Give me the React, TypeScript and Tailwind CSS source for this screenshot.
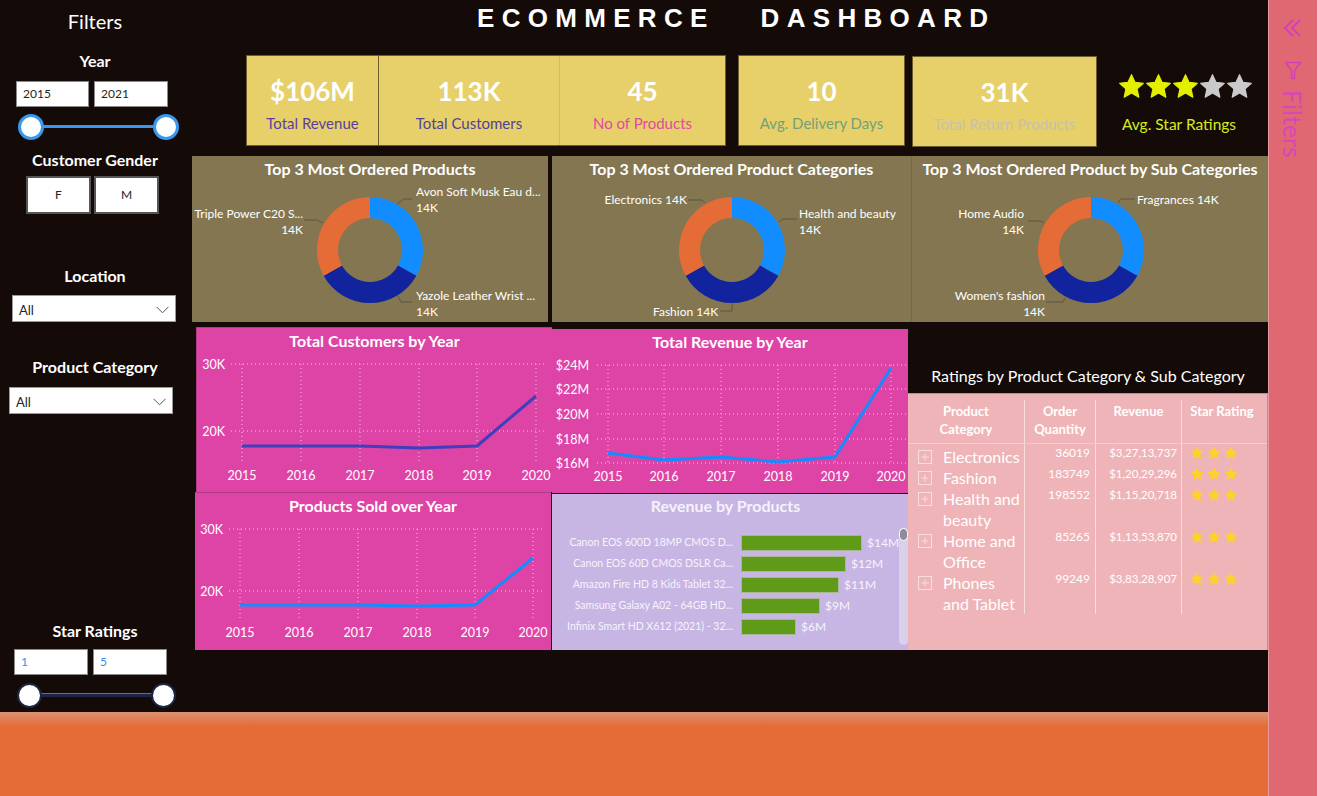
import React from "react";

const PI = Math.PI;
function pt(cx: number, cy: number, rad: number, a: number): [number, number] {
  return [cx + rad * Math.sin((a * PI) / 180), cy - rad * Math.cos((a * PI) / 180)];
}
function arcPath(cx: number, cy: number, R: number, r: number, a0: number, a1: number) {
  const [x0, y0] = pt(cx, cy, R, a0);
  const [x1, y1] = pt(cx, cy, R, a1);
  const [x2, y2] = pt(cx, cy, r, a1);
  const [x3, y3] = pt(cx, cy, r, a0);
  const large = a1 - a0 > 180 ? 1 : 0;
  return `M${x0} ${y0} A${R} ${R} 0 ${large} 1 ${x1} ${y1} L${x2} ${y2} A${r} ${r} 0 ${large} 0 ${x3} ${y3} Z`;
}

type DLabel = { lines: string[]; x: number; y: number; anchor: "start" | "end"; line: [number, number][] };

function DonutPanel({ title, w, cx, labels, cls }: { title: string; w: number; cx: number; labels: DLabel[]; cls: string }) {
  const cy = 94;
  return (
    <div className={`h-[166px] bg-[#847650] ${cls}`}>
      <div className="pt-[3px] text-center text-[16px] font-bold leading-[20px] text-white">{title}</div>
      <svg width={w} height={143} viewBox={`0 23 ${w} 143`} className="block">
        <path d={arcPath(cx, cy, 53, 32, 0, 119)} fill="#118dff" />
        <path d={arcPath(cx, cy, 53, 32, 119, 241)} fill="#12239e" />
        <path d={arcPath(cx, cy, 53, 32, 241, 360)} fill="#e66c37" />
        {labels.map((l, i) => (
          <g key={i}>
            <polyline points={l.line.map((p) => p.join(",")).join(" ")} fill="none" stroke="#5f5540" strokeWidth={1} />
            {l.lines.map((t, j) => (
              <text
                key={j}
                x={l.x}
                y={l.y + j * 16}
                textAnchor={l.anchor}
                dominantBaseline="central"
                fontSize={12}
                fill="#ffffff"
                fontFamily="Lato, 'Open Sans', sans-serif"
              >
                {t}
              </text>
            ))}
          </g>
        ))}
      </svg>
    </div>
  );
}

type LC = {
  title: string;
  w: number;
  h: number;
  cls: string;
  yl: { t: string; y: number }[];
  labelRight: number;
  gridL: number;
  gridR: number;
  xs: number[];
  gridTop: number;
  gridBottom: number;
  xLabelY: number;
  ys: number[];
  color: string;
};

function LineChart(p: LC) {
  const years = ["2015", "2016", "2017", "2018", "2019", "2020"];
  return (
    <div className={`bg-[#de44a6] ${p.cls}`}>
      <div className="h-[25px] pt-[3px] text-center text-[16px] font-bold leading-[20px] text-white">{p.title}</div>
      <svg width={p.w} height={p.h - 25} viewBox={`0 25 ${p.w} ${p.h - 25}`} className="block">
        {p.yl.map((l, i) => (
          <g key={i}>
            <line x1={p.gridL} x2={p.gridR} y1={l.y} y2={l.y} stroke="#f2c3e2" strokeWidth={1} strokeDasharray="1 3" />
            <text x={p.labelRight} y={l.y} textAnchor="end" dominantBaseline="central" fontSize={12.5} fill="#fff" fontFamily="Lato, 'Open Sans', sans-serif">
              {l.t}
            </text>
          </g>
        ))}
        {p.xs.map((x, i) => (
          <g key={i}>
            <line x1={x} x2={x} y1={p.gridTop} y2={p.gridBottom} stroke="#f2c3e2" strokeWidth={1} strokeDasharray="1 3" />
            <text x={x} y={p.xLabelY} textAnchor="middle" dominantBaseline="central" fontSize={12.5} fill="#fff" fontFamily="Lato, 'Open Sans', sans-serif">
              {years[i]}
            </text>
          </g>
        ))}
        <polyline
          points={p.xs.map((x, i) => `${x},${p.ys[i]}`).join(" ")}
          fill="none"
          stroke={p.color}
          strokeWidth={3}
          strokeLinejoin="round"
        />
      </svg>
    </div>
  );
}

function Star({ size, color }: { size: number; color: string }) {
  return (
    <svg width={size} height={size} viewBox="0 0 24 24">
      <polygon
        points="12,1.5 15.1,8.3 22.5,9.1 17,14.1 18.5,21.5 12,17.8 5.5,21.5 7,14.1 1.5,9.1 8.9,8.3"
        fill={color}
        stroke={color}
        strokeWidth={1}
        strokeLinejoin="round"
      />
    </svg>
  );
}

function ChevronDown() {
  return (
    <svg width="13" height="8" viewBox="0 0 13 8">
      <polyline points="0.5,0.8 6.5,6.8 12.5,0.8" fill="none" stroke="#555" strokeWidth={1} />
    </svg>
  );
}

function FilterPanel() {
  return (
    <div className="flex w-[190px] shrink-0 flex-col text-white">
      <div className="pt-[8px] text-center text-[20px] leading-[26px]">Filters</div>
      <div className="mt-[17px] text-center text-[16px] font-bold leading-[20px]">Year</div>
      <div className="mt-[10px] flex gap-[5px] pl-[16px]">
        <div className="flex h-[26px] w-[73px] items-center border border-[#8a8a8a] bg-white pl-[6px] text-[12px] text-[#252423]">2015</div>
        <div className="flex h-[26px] w-[74px] items-center border border-[#8a8a8a] bg-white pl-[6px] text-[12px] text-[#252423]">2021</div>
      </div>
      <div className="relative ml-[18px] mt-[7px] h-[26px] w-[161px]">
        <div className="absolute left-[13px] right-[13px] top-[11px] h-[3px] bg-[#3a97ee]" />
        <div className="absolute left-0 top-0 h-[26px] w-[26px] rounded-full border-[3px] border-[#3a97ee] bg-white" />
        <div className="absolute right-0 top-0 h-[26px] w-[26px] rounded-full border-[3px] border-[#3a97ee] bg-white" />
      </div>
      <div className="mt-[10px] text-center text-[16px] font-bold leading-[20px]">Customer Gender</div>
      <div className="mt-[6px] flex gap-[3px] pl-[26px]">
        <div className="flex h-[38px] w-[65px] items-center justify-center border-2 border-[#555] bg-white text-[12px] text-[#252423]">F</div>
        <div className="flex h-[38px] w-[65px] items-center justify-center border-2 border-[#555] bg-white text-[12px] text-[#252423]">M</div>
      </div>
      <div className="mt-[52px] text-center text-[16px] font-bold leading-[20px]">Location</div>
      <div className="ml-[12px] mt-[9px] flex h-[27px] w-[164px] items-end justify-between border border-[#9a9a9a] bg-white pb-[3px] pl-[6px] pr-[6px] text-[13px] leading-[16px] text-[#252423]">
        <span>All</span>
        <span className="mb-[4px]"><ChevronDown /></span>
      </div>
      <div className="mt-[35px] text-center text-[16px] font-bold leading-[20px]">Product Category</div>
      <div className="ml-[9px] mt-[10px] flex h-[27px] w-[164px] items-end justify-between border border-[#9a9a9a] bg-white pb-[3px] pl-[6px] pr-[6px] text-[13px] leading-[16px] text-[#252423]">
        <span>All</span>
        <span className="mb-[4px]"><ChevronDown /></span>
      </div>
      <div className="mt-[207px] text-center text-[16px] font-bold leading-[20px]">Star Ratings</div>
      <div className="mt-[8px] flex gap-[5px] pl-[14px]">
        <div className="flex h-[26px] w-[74px] items-center border border-[#8a8a8a] bg-white pl-[6px] text-[12px] text-[#3a8ee6]">1</div>
        <div className="flex h-[26px] w-[74px] items-center border border-[#8a8a8a] bg-white pl-[6px] text-[12px] text-[#3a8ee6]">5</div>
      </div>
      <div className="relative ml-[17px] mt-[8px] h-[25px] w-[159px]">
        <div className="absolute left-[12px] right-[12px] top-[10px] h-[4px] border-t border-[#6b6b7a] bg-[#1d2547]" />
        <div className="absolute left-0 top-0 h-[25px] w-[25px] rounded-full border-2 border-[#1d2547] bg-white" />
        <div className="absolute right-0 top-0 h-[25px] w-[25px] rounded-full border-2 border-[#1d2547] bg-white" />
      </div>
    </div>
  );
}

function Kpi({ value, label, labelColor, cls }: { value: string; label: string; labelColor: string; cls: string }) {
  return (
    <div className={`flex flex-col items-center bg-[#e7d06a] ${cls}`}>
      <div className="pt-[20px] text-[26px] font-bold leading-[30px] text-white">{value}</div>
      <div className={`mt-[8px] text-[15px] leading-[18px] ${labelColor}`}>{label}</div>
    </div>
  );
}

const products = [
  { n: "Canon EOS 600D 18MP CMOS D...", w: 121, v: "$14M" },
  { n: "Canon EOS 60D CMOS DSLR Ca...", w: 105, v: "$12M" },
  { n: "Amazon Fire HD 8 Kids Tablet 32...", w: 98, v: "$11M" },
  { n: "Samsung Galaxy A02 - 64GB HD...", w: 79, v: "$9M" },
  { n: "Infinix Smart HD X612 (2021) - 32...", w: 55, v: "$6M" },
];

const rows = [
  { c: ["Electronics"], q: "36019", r: "$3,27,13,737" },
  { c: ["Fashion"], q: "183749", r: "$1,20,29,296" },
  { c: ["Health and", "beauty"], q: "198552", r: "$1,15,20,718" },
  { c: ["Home and", "Office"], q: "85265", r: "$1,13,53,870" },
  { c: ["Phones", "and Tablet"], q: "99249", r: "$3,83,28,907" },
];

function PlusBox() {
  return (
    <svg width="14" height="14" viewBox="0 0 14 14" className="shrink-0">
      <rect x="0.5" y="0.5" width="13" height="13" fill="none" stroke="#f8dede" strokeWidth={1} />
      <line x1="3.5" x2="10.5" y1="7" y2="7" stroke="#f8dede" strokeWidth={1} />
      <line x1="7" x2="7" y1="3.5" y2="10.5" stroke="#f8dede" strokeWidth={1} />
    </svg>
  );
}

function RatingsTable() {
  return (
    <div className="h-[257px] border-t border-r border-[#c08a8e] bg-[#efb4b7] pt-[6px] text-white">
      <div className="flex h-[44px] border-b border-[#f5cccc] text-[13px] font-bold leading-[18px]">
        <div className="w-[116px] pt-[2px] text-center">Product<br />Category</div>
        <div className="w-[71px] border-l border-[#f8dcdc] pt-[2px] text-center">Order<br />Quantity</div>
        <div className="w-[86px] border-l border-[#f8dcdc] pt-[2px] text-center">Revenue</div>
        <div className="w-[81px] border-l border-[#f8dcdc] pt-[2px] text-center">Star Rating</div>
      </div>
      <div className="flex h-[2px]">
        <div className="w-[116px]" />
        <div className="w-[71px] border-l border-[#f8dcdc]" />
        <div className="w-[86px] border-l border-[#f8dcdc]" />
        <div className="w-[81px] border-l border-[#f8dcdc]" />
      </div>
      {rows.map((r, i) => (
        <div key={i} className="flex">
          <div className="flex w-[116px] items-start gap-[11px] pl-[10px]">
            <div className="mt-[4px]"><PlusBox /></div>
            <div className="text-[16px] leading-[21px]">
              {r.c.map((t, j) => (
                <div key={j}>{t}</div>
              ))}
            </div>
          </div>
          <div className="w-[71px] border-l border-[#f8dcdc] pr-[5px] pt-[1px] text-right text-[12px] leading-[12px]">{r.q}</div>
          <div className="w-[86px] border-l border-[#f8dcdc] pr-[4px] pt-[1px] text-right text-[11.5px] leading-[12px]">{r.r}</div>
          <div className="flex w-[81px] items-start gap-[3px] border-l border-[#f8dcdc] pl-[8px]">
            <Star size={14} color="#fdd22a" />
            <Star size={14} color="#fdd22a" />
            <Star size={14} color="#fdd22a" />
          </div>
        </div>
      ))}
    </div>
  );
}

function MainArea() {
  return (
    <div className="flex w-[1078px] flex-col">
      <div className="flex h-[44px] items-start pl-[287px] pt-[3px] font-['Liberation_Sans',Arial,sans-serif] text-[26px] font-bold leading-[30px] tracking-[7.3px] text-white">
        <span>ECOMMERCE</span>
        <span className="ml-[46px]">DASHBOARD</span>
      </div>
      <div className="mt-[11px] flex h-[92px] items-start">
        <Kpi value="$106M" label="Total Revenue" labelColor="text-[#5a3f9f]" cls="ml-[56px] h-[91px] w-[133px] border border-[#6d5c2c]" />
        <div className="flex h-[91px] w-[347px] border-y border-r border-[#6d5c2c]">
          <Kpi value="113K" label="Total Customers" labelColor="text-[#51409b]" cls="w-[180px] h-full" />
          <Kpi value="45" label="No of Products" labelColor="text-[#e04aa0]" cls="flex-1 h-full border-l border-[#d4bb55]" />
        </div>
        <Kpi value="10" label="Avg. Delivery Days" labelColor="text-[#73a078]" cls="ml-[12px] h-[91px] w-[167px] border border-[#6d5c2c]" />
        <Kpi value="31K" label="Total Return Products" labelColor="text-[#c6c0b0]" cls="ml-[7px] mt-[1px] h-[91px] w-[185px] border border-[#6d5c2c]" />
        <div className="ml-[8px] flex w-[160px] flex-col items-center">
          <div className="mt-[18px] flex">
            <Star size={27} color="#e4ef00" />
            <Star size={27} color="#e4ef00" />
            <Star size={27} color="#e4ef00" />
            <Star size={27} color="#cacaca" />
            <Star size={27} color="#cacaca" />
          </div>
          <div className="mr-[12px] mt-[15px] text-[15.5px] leading-[18px] text-[#d6ec1e]">Avg. Star Ratings</div>
        </div>
      </div>
      <div className="mt-[9px] flex">
        <DonutPanel
          title="Top 3 Most Ordered Products"
          w={356}
          cx={178}
          cls="ml-[2px] w-[356px]"
          labels={[
            { lines: ["Avon Soft Musk Eau d...", "14K"], x: 224, y: 35, anchor: "start", line: [[205, 48], [212, 43], [220, 43]] },
            { lines: ["Triple Power C20 S...", "14K"], x: 111, y: 57, anchor: "end", line: [[112, 64], [125, 64], [131, 67]] },
            { lines: ["Yazole Leather Wrist ...", "14K"], x: 224, y: 139, anchor: "start", line: [[206, 140], [209, 146], [220, 146]] },
          ]}
        />
        <DonutPanel
          title="Top 3 Most Ordered Product Categories"
          w={359}
          cx={180}
          cls="ml-[4px] w-[359px]"
          labels={[
            { lines: ["Electronics 14K"], x: 135, y: 43, anchor: "end", line: [[136, 44], [150, 44], [153, 47]] },
            { lines: ["Health and beauty", "14K"], x: 247, y: 57, anchor: "start", line: [[227, 66], [231, 63], [245, 63]] },
            { lines: ["Fashion 14K"], x: 101, y: 155, anchor: "start", line: [[180, 147], [180, 155], [168, 155]] },
          ]}
        />
        <DonutPanel
          title="Top 3 Most Ordered Product by Sub Categories"
          w={357}
          cx={179}
          cls="w-[357px] border-l border-[#766948]"
          labels={[
            { lines: ["Fragrances 14K"], x: 225, y: 43, anchor: "start", line: [[206, 47], [209, 43], [223, 43]] },
            { lines: ["Home Audio", "14K"], x: 112, y: 57, anchor: "end", line: [[116, 65], [129, 65], [132, 67]] },
            { lines: ["Women's fashion", "14K"], x: 133, y: 139, anchor: "end", line: [[134, 146], [151, 146], [153, 142]] },
          ]}
        />
      </div>
      <div className="mt-[5px] flex">
        <div className="ml-[5px] flex w-[357px] flex-col">
          <LineChart
            title="Total Customers by Year"
            w={356}
            h={165}
            cls="ml-[1px] h-[165px] w-[356px] border-t border-l border-[#b23a86]"
            yl={[{ t: "30K", y: 36 }, { t: "20K", y: 103 }]}
            labelRight={28}
            gridL={34}
            gridR={347}
            xs={[45, 104, 163, 222, 280, 339]}
            gridTop={36}
            gridBottom={136}
            xLabelY={147}
            ys={[118, 118, 118, 120, 118, 68]}
            color="#3f3fbb"
          />
          <LineChart
            title="Products Sold over Year"
            w={356}
            h={158}
            cls="h-[158px] w-[356px] border-t border-[#b23a86]"
            yl={[{ t: "30K", y: 36 }, { t: "20K", y: 98 }]}
            labelRight={28}
            gridL={34}
            gridR={348}
            xs={[45, 104, 163, 222, 280, 338]}
            gridTop={36}
            gridBottom={128}
            xLabelY={139}
            ys={[112, 112, 112, 113, 112, 65]}
            color="#118dff"
          />
        </div>
        <div className="flex w-[356px] flex-col">
          <LineChart
            title="Total Revenue by Year"
            w={356}
            h={164}
            cls="mt-[2px] h-[164px] w-[356px]"
            yl={[
              { t: "$24M", y: 36 },
              { t: "$22M", y: 60 },
              { t: "$20M", y: 85 },
              { t: "$18M", y: 110 },
              { t: "$16M", y: 134 },
            ]}
            labelRight={37}
            gridL={45}
            gridR={354}
            xs={[56, 112, 169, 226, 283, 339]}
            gridTop={36}
            gridBottom={134}
            xLabelY={147}
            ys={[124, 131, 128, 133, 128, 39]}
            color="#118dff"
          />
          <div className="mt-[1px] flex h-[156px] bg-[#c7b6e4]">
            <div className="flex flex-1 flex-col">
              <div className="pt-[2px] text-center text-[16px] font-bold leading-[20px] text-[#f6f1fb]">Revenue by Products</div>
              <div className="mt-[16px] flex flex-col">
                {products.map((p, i) => (
                  <div key={i} className="flex h-[21px] items-center">
                    <div className="w-[181px] whitespace-nowrap text-right text-[10.5px] text-[#f7f3fb]">{p.n}</div>
                    <div className="ml-[8px] h-[16px] border border-[#a9b893] bg-[#5f9a18]" style={{ width: p.w }} />
                    <div className="ml-[5px] text-[12px] text-[#f7f3fb]">{p.v}</div>
                  </div>
                ))}
              </div>
            </div>
            <div className="mr-[3px] mt-[34px] flex h-[117px] w-[9px] flex-col rounded-full bg-[#d9d0ea]">
              <div className="h-[13px] w-[9px] rounded-full border border-white bg-[#8e8c9c]" />
            </div>
          </div>
        </div>
        <div className="flex w-[360px] flex-col">
          <div className="h-[66px] pt-[39px] text-center text-[16px] leading-[20px] text-white">Ratings by Product Category &amp; Sub Category</div>
          <RatingsTable />
        </div>
      </div>
    </div>
  );
}

function Sidebar() {
  return (
    <div className="flex w-[50px] flex-col items-center border-l border-r border-l-[#e79aa0] border-r-[#f5d0d3] bg-[#df6873]">
      <svg width="20" height="20" viewBox="0 0 20 20" className="mt-[18px]">
        <polyline points="10,2 2,10 10,18" fill="none" stroke="#d63fb8" strokeWidth={2} />
        <polyline points="17,2 9,10 17,18" fill="none" stroke="#d63fb8" strokeWidth={2} />
      </svg>
      <svg width="18" height="19" viewBox="0 0 18 19" className="mt-[23px]">
        <path d="M1.5 1.5 H16.5 L10.5 9.5 V17.5 H7.5 V9.5 Z" fill="none" stroke="#d63fb8" strokeWidth={1.6} strokeLinejoin="round" />
      </svg>
      <div className="mt-[10px] text-[25px] leading-[26px] text-[#d846b8] [writing-mode:vertical-rl]">Filters</div>
    </div>
  );
}

export default function App() {
  return (
    <div className="flex h-[796px] w-[1318px] overflow-hidden bg-[#140b08] font-['Lato','Open_Sans',sans-serif]">
      <div className="flex w-[1268px] shrink-0 flex-col">
        <div className="flex h-[712px]">
          <FilterPanel />
          <MainArea />
        </div>
        <div className="h-[84px] bg-[linear-gradient(to_bottom,#dd9272,#e56c37_14px)]" />
      </div>
      <Sidebar />
    </div>
  );
}
